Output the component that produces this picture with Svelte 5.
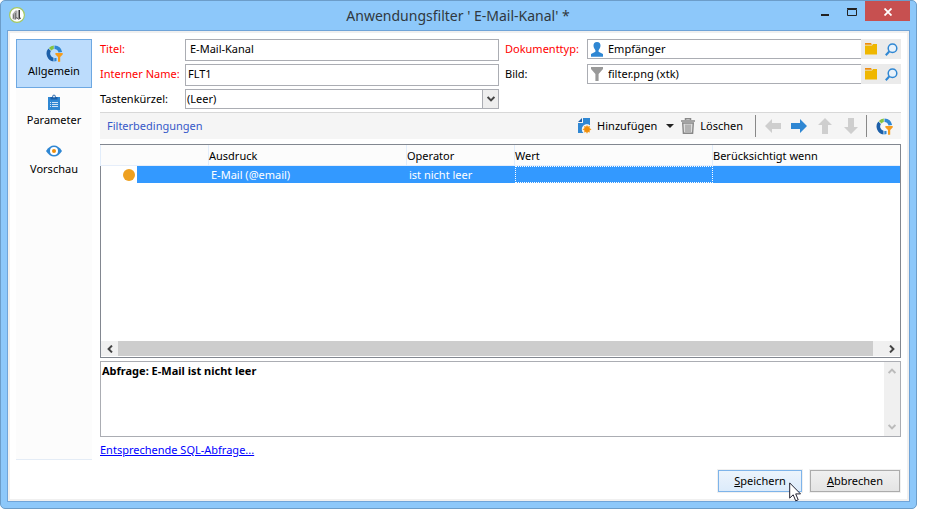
<script>
  const tabs = [
    { id: 'general', label: 'Allgemein' },
    { id: 'params', label: 'Parameter' },
    { id: 'preview', label: 'Vorschau' }
  ];
  let active = $state('general');
  let title = $state('E-Mail-Kanal');
  let name = $state('FLT1');
  let docType = $state('Empfänger');
  let image = $state('filter.png (xtk)');
  const rows = [{ expression: 'E-Mail (@email)', operator: 'ist nicht leer', value: '', when: '' }];
</script>

{#snippet ring()}
  <svg width="17" height="17" viewBox="0 0 17 17" aria-hidden="true">
    <path d="M8.5 .5a8 8 0 0 1 7.600 6.500l-3.600.5A4.500 4.500 0 0 0 8.500 4z" fill="#2f87d3" />
    <path d="M7.800.5V4A4.500 4.500 0 0 0 5.500 5.400L2.900 2.900A8 8 0 0 1 7.800.5z" fill="#84c341" />
    <path d="M2.300 3.500l2.600 2.500A4.500 4.500 0 0 0 7.500 12.800v3.600A8 8 0 0 1 2.300 3.500z" fill="#1c5fa8" />
    <path d="M8.300 13h2.200v3.100l-2.200.4z" fill="#2f87d3" />
    <path d="M9.400 8H16.700v1.400L14.200 12v4.800H12V12L9.400 9.400z" fill="#f59b1c" />
  </svg>
{/snippet}

{#snippet arrow(turn, color)}
  <svg width="16" height="16" viewBox="0 0 16 16" aria-hidden="true">
    <path d="M16 8L9 1v4H0v6h9v4z" fill={color} transform="rotate({turn} 8 8)" />
  </svg>
{/snippet}

{#snippet chevron(turn, color)}
  <svg width="8" height="8" viewBox="0 0 8 8" aria-hidden="true">
    <path d="M.6 2L4 5.400 7.400 2" fill="none" stroke={color} stroke-width="2" transform="rotate({turn} 4 4)" />
  </svg>
{/snippet}

{#snippet pickers()}
  <span class="pickers">
    <button aria-label="Ordner öffnen">
      <svg width="12" height="12" viewBox="0 0 12 12" aria-hidden="true">
        <path d="M0 0h6l1 1.800H0z" fill="#ee8d0c" /><path d="M0 2.500h7L8 1h4v10.500H0z" fill="#efb700" />
      </svg>
    </button>
    <button aria-label="Suchen">
      <svg width="13" height="13" viewBox="0 0 13 13" aria-hidden="true">
        <circle cx="7.500" cy="5.200" r="4.300" fill="#e8f2fb" stroke="#2f87d3" stroke-width="1.500" />
        <path d="M4.200 8.500L.8 12.200" stroke="#2f87d3" stroke-width="2" />
      </svg>
    </button>
  </span>
{/snippet}

<div class="window">
  <header>
    <svg class="logo" width="16" height="16" viewBox="0 0 16 16" aria-hidden="true">
      <circle cx="8" cy="8" r="7.400" fill="#fff" stroke="#a5c862" stroke-width="1.200" />
      <path d="M3.500 12V7l3-3.500h2V11l-2 2z" fill="#aaa" />
      <path d="M4.500 11.500V7.500M6.500 6v6" stroke="#777" />
      <path d="M10.200 3v8.500" stroke="#222" stroke-width="1.400" />
      <path d="M7.500 10.500q2 3 4.500 .5" fill="none" stroke="#444" />
    </svg>
    <h1>Anwendungsfilter ' E-Mail-Kanal' *</h1>
    <div class="controls">
      <button aria-label="Minimieren"><svg width="8" height="10"><path d="M0 7h8v2H0z" fill="#222" /></svg></button>
      <button aria-label="Maximieren"><svg width="10" height="8"><path d="M.5 1.500h9v6h-9zM0 .5h10" fill="none" stroke="#222" /></svg></button>
      <button class="close" aria-label="Schließen"><svg width="8" height="8"><path d="M.5.5l7 7M7.500.5l-7 7" stroke="#fff" stroke-width="1.800" /></svg></button>
    </div>
  </header>

  <div class="client">
    <nav>
      {#each tabs as tab}
        <button class:active={active === tab.id} onclick={() => (active = tab.id)}>
          <span class="tab-icon">
            {#if tab.id === 'general'}
              {@render ring()}
            {:else if tab.id === 'params'}
              <svg width="12" height="16" viewBox="0 0 12 16" aria-hidden="true">
                <path d="M0 3h12v13H0z" fill="#2f87d3" />
                <path d="M2.500 5.500V3h1.700a1.800 2.500 0 0 1 3.600 0h1.700v2.500z" fill="#1c5fa8" />
                <circle cx="6" cy="2.500" r=".9" fill="#fff" />
                <path d="M2 8.500h1M4 8.500h6M2 10.500h1M4 10.500h6M2 12.500h1M4 12.500h6" stroke="#cfe4f6" />
              </svg>
            {:else}
              <svg width="16" height="12" viewBox="0 0 16 12" aria-hidden="true">
                <path d="M0 6Q3.500.5 8 .5T16 6Q12.500 11.500 8 11.500T0 6z" fill="#2f87d3" />
                <circle cx="8" cy="6" r="4" fill="#fff" /><circle cx="8" cy="6" r="2" fill="#f08f0a" />
              </svg>
            {/if}
          </span>
          {tab.label}
        </button>
      {/each}
    </nav>

    <main>
      <div class="fields">
        <div class="group left">
          <label class="required" for="title">Titel:</label>
          <input id="title" class="box indent" bind:value={title} />
          <label class="required" for="name">Interner Name:</label>
          <input id="name" class="box" bind:value={name} />
          <label for="key">Tastenkürzel:</label>
          <div class="combo">
            <select id="key"><option>(Leer)</option></select>
            <span class="drop">{@render chevron(0, '#444')}</span>
          </div>
        </div>
        <div class="group right">
          <label class="required" for="doctype">Dokumenttyp:</label>
          <div class="lookup">
            <svg width="12" height="15" viewBox="0 0 12 15" aria-hidden="true">
              <path d="M6 0c2.500 0 3.500 1.600 3.500 3.600S8.300 7.200 7.600 8.200v1.600L12 12v2.700H0V12l4.400-2.200V8.200C3.700 7.200 2.500 5.600 2.500 3.600S3.500 0 6 0z" fill="#2f87d3" />
            </svg>
            <input id="doctype" bind:value={docType} />
            {@render pickers()}
          </div>
          <label for="image">Bild:</label>
          <div class="lookup">
            <svg width="12" height="14" viewBox="0 0 12 14" aria-hidden="true">
              <path d="M0 0h12v2L7.600 7v7H4.400V7L0 2z" fill="#999" />
            </svg>
            <input id="image" bind:value={image} />
            {@render pickers()}
          </div>
        </div>
      </div>

      <div class="toolbar">
        <h2>Filterbedingungen</h2>
        <button class="add">
          <svg width="14" height="16" viewBox="0 0 14 16" aria-hidden="true">
            <path d="M5 0h7v7.500A4.600 4.600 0 0 0 5.500 15H0V5h5z" fill="#2f87d3" />
            <path d="M4 0v4H0z" fill="#1c5fa8" />
            <circle cx="9" cy="11.400" r="4.800" fill="#f5f5f5" />
            <path d="M9 7l1 1.600 1.900-.5-.3 1.900 1.900 1.400-1.900 1 .3 2-1.900-.4L9 15.800 8 14l-1.900.4.3-2-1.900-1 1.900-1.400-.3-1.900L8 8.600z" fill="#f59b1c" />
            <circle cx="9" cy="11.400" r="2.400" fill="#ee8d0c" />
          </svg>
          Hinzufügen
          <svg class="more" width="8" height="4"><path d="M0 0h8L4 4z" fill="#222" /></svg>
        </button>
        <button class="remove">
          <svg width="14" height="16" viewBox="0 0 14 16" aria-hidden="true">
            <path d="M4.500 2V.7h5V2M0 3h14" fill="none" stroke="#888" stroke-width="1.500" />
            <path d="M1.700 5h10.600l-.7 10.200H2.400z" fill="#ddd" stroke="#888" stroke-width="1.400" />
            <path d="M5 6.500V14M7 6.500V14M9 6.500V14" stroke="#888" />
          </svg>
          Löschen
        </button>
        <div class="moves">
          <button aria-label="Nach links">{@render arrow(180, '#cecece')}</button>
          <button aria-label="Nach rechts">{@render arrow(0, '#2f87d3')}</button>
          <button aria-label="Nach oben">{@render arrow(270, '#cecece')}</button>
          <button aria-label="Nach unten">{@render arrow(90, '#cecece')}</button>
        </div>
        <button class="filter" aria-label="Filter">{@render ring()}</button>
      </div>

      <div class="list">
        <table>
          <colgroup><col class="c-mark" /><col class="c-gap" /><col class="c-expr" /><col class="c-op" /><col class="c-value" /><col /></colgroup>
          <thead>
            <tr><th colspan="2"></th><th>Ausdruck</th><th>Operator</th><th>Wert</th><th>Berücksichtigt wenn</th></tr>
          </thead>
          <tbody>
            {#each rows as row}
              <tr>
                <td class="mark"><span></span></td>
                <td></td>
                <td>{row.expression}</td>
                <td>{row.operator}</td>
                <td class="focus">{row.value}</td>
                <td>{row.when}</td>
              </tr>
            {/each}
          </tbody>
        </table>
        <div class="hscroll">
          <span>{@render chevron(90, '#444')}</span>
          <i></i>
          <span class="end">{@render chevron(270, '#444')}</span>
        </div>
      </div>

      <div class="query">
        <textarea aria-label="Abfrage" readonly>Abfrage: E-Mail ist nicht leer</textarea>
        <div class="vscroll">{@render chevron(180, '#bbb')}{@render chevron(0, '#bbb')}</div>
      </div>

      <a href="#sql">Entsprechende SQL-Abfrage...</a>

      <footer>
        <button class="save"><span><u>S</u>peichern</span>
          <svg class="cursor" width="13" height="20" viewBox="0 0 13 20" aria-hidden="true">
            <path d="M.7.9v15.200l3.500-3.300 2.500 6 2.500-1-2.500-5.900h4.800z" fill="#fff" stroke="#223" />
          </svg>
        </button>
        <button><span><u>A</u>bbrechen</span></button>
      </footer>
    </main>
  </div>
</div>

<style>
  :global(body) { background: #fff; }
  .window, .window :is(input, select, textarea, button) {
    font-family: "Noto Sans", "Open Sans", sans-serif;
    font-size: 11px;
    line-height: 16px;
    color: #000;
  }
  .window * { box-sizing: border-box; }
  .window {
    box-sizing: border-box;
    margin-right: 21px;
    padding: 0 6px 6px;
    background: #8dc8fa;
    border: 1px solid #6c9dc9;
    border-radius: 5px;
  }
  button { margin: 0; padding: 0; border: 0; background: none; }
  svg { display: block; flex: none; }
  h1, h2 { margin: 0; font-weight: 400; }

  header { display: flex; align-items: flex-start; height: 29px; }
  .logo { margin: 6px 0 0 2px; }
  h1 { flex: 1; padding: 5px 0 0 80px; text-align: center; font-size: 14px; line-height: 20px; color: #303840; }
  .controls { display: flex; }
  .controls button { display: flex; align-items: center; justify-content: center; width: 27px; height: 20px; padding-top: 1px; }
  .controls .close { width: 45px; background: #c75050; }

  .client {
    display: flex;
    gap: 8px;
    padding: 6px 6px 9px;
    background: #fff;
    border: 1px solid #70a4d8;
    box-shadow: inset 0 0 0 2px #f0f0f0;
  }
  nav { width: 76px; flex: none; margin: 2px 0 32px 2px; background: #fcfcfc; border-bottom: 1px solid #e4ecf6; }
  nav button { display: flex; flex-direction: column; align-items: center; gap: 1px; width: 100%; height: 49px; padding-top: 4px; border: 1px solid transparent; }
  nav .active { background: #bcdcfc; border-color: #6da8e2; }
  .tab-icon { display: flex; align-items: center; height: 18px; }

  main { flex: 1; min-width: 0; padding: 2px 2px 0 0; }
  .fields { display: flex; gap: 6px; }
  .group { display: grid; grid-auto-rows: 22px; row-gap: 3px; align-items: start; }
  .group label { line-height: 20px; white-space: nowrap; }
  .left { grid-template-columns: 85px 1fr; flex: 399; }
  .right { grid-template-columns: 82px 1fr; flex: 396; }
  .required { color: #f00; }
  .box { width: 100%; height: 22px; padding: 0 2px 4px; border: 1px solid #abadb3; outline: 0; }
  .indent { padding-left: 4px; }
  .combo { display: flex; height: 20px; border: 1px solid #abadb3; }
  .combo select { flex: 1; min-width: 0; padding: 0 1px; border: 0; appearance: none; background: #fff; outline: 0; }
  .drop { display: flex; align-items: center; justify-content: center; width: 16px; background: #eee; border-left: 1px solid #abadb3; }
  .lookup { display: flex; align-items: center; height: 20px; padding-left: 3px; border: 1px solid #abadb3; border-right: 0; }
  .lookup input { flex: 1; min-width: 0; height: 18px; margin-left: 4px; padding: 0 1px 2px; border: 0; outline: 0; background: none; }
  .pickers { display: flex; width: 40px; height: 20px; background: #ebebeb; }
  .pickers button { display: flex; flex: 1; align-items: center; justify-content: center; }

  .toolbar { display: flex; align-items: center; height: 27px; margin-top: 1px; padding: 0 8px 0 7px; background: #f5f5f5; border-top: 1px solid #d8d8d8; }
  .toolbar h2 { flex: 1; font-size: 11px; color: #3558c8; }
  .toolbar button { display: flex; align-items: center; }
  .add, .remove { gap: 5px; }
  .more { margin-left: 4px; }
  .remove { margin-left: 7px; }
  .moves { display: flex; gap: 10px; height: 22px; margin: 0 9px 0 12px; padding: 0 7px 0 9px; border: solid #888; border-width: 0 1px; }

  .list { display: flex; flex-direction: column; height: 214px; margin-top: 5px; border: 1px solid #828790; }
  table { width: 100%; table-layout: fixed; border-collapse: separate; border-spacing: 0; }
  .c-mark { width: 36px; }
  .c-gap { width: 72px; }
  .c-expr { width: 198px; }
  .c-op { width: 108px; }
  .c-value { width: 198px; }
  th { height: 21px; padding: 2px 0 0; text-align: left; font-weight: 400; background: #fcfcfc; border-bottom: 1px solid #e6eefa; box-shadow: -1px 0 #e2edfb; }
  td { height: 17px; padding: 0 2px; line-height: 15px; color: #fff; background: #3399ff; }
  td.mark { padding: 0 2px 0 0; background: #fff; }
  .mark span { display: block; width: 12px; height: 12px; margin-left: auto; border-radius: 50%; background: #eea020; }
  .focus { border: 1px dotted #fff; }
  .hscroll { display: flex; height: 15px; margin: auto 0 1px; background: #f0f0f0; }
  .hscroll span { display: flex; align-items: center; justify-content: center; width: 17px; }
  .hscroll i { flex: 1; margin-right: 10px; background: #cdcdcd; }

  .query { display: flex; height: 76px; margin-top: 3px; border: 1px solid #abadb3; }
  textarea { flex: 1; padding: 1px; border: 0; outline: 0; resize: none; overflow: hidden; font-weight: 700; }
  .vscroll { display: flex; flex-direction: column; justify-content: space-between; align-items: center; width: 16px; padding: 5px 0; background: #f0f0f0; }
  a { display: block; width: fit-content; margin-top: 5px; color: #00f; }

  footer { display: flex; justify-content: flex-end; gap: 8px; margin: 12px 1px 0 0; }
  footer button { position: relative; width: 90px; height: 22px; background: linear-gradient(#f0f0f0, #e4e4e4); border: 1px solid #acacac; box-shadow: 0 0 0 1px #f0f0f0; }
  footer .save { width: 84px; background: linear-gradient(#ecf4fc, #dcebfb); border-color: #7eb4ea; }
  .cursor { position: absolute; top: 11px; right: -1px; z-index: 1; }
</style>
